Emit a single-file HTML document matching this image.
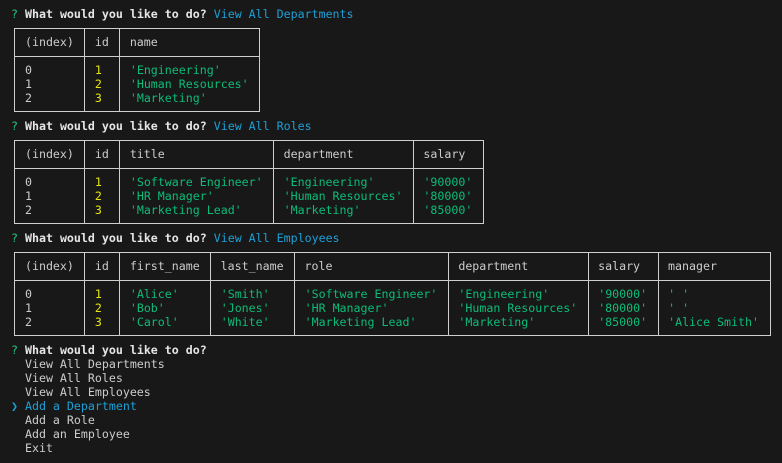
<!DOCTYPE html>
<html><head><meta charset="utf-8"><style>
html,body{margin:0;padding:0;background:#181818;width:782px;height:463px;overflow:hidden}
pre{position:absolute;left:11px;top:7px;margin:0;font-family:"DejaVu Sans Mono","Liberation Mono",monospace;font-size:11.62px;line-height:14px;color:#cccccc}
.q{color:#23c47e}.b{font-weight:bold;color:#e6e6e6}.c{color:#1ea0d6}.g{color:#0dbc79}.y{color:#e5e510}
.h{position:absolute;height:1px;background:#cfcfcf}
.v{position:absolute;width:1px;background:#cfcfcf}
</style></head><body>
<pre><span class="q">?</span> <span class="b">What would you like to do?</span> <span class="c">View All Departments</span>

  (index)   id   name

  0         <span class="y">1</span>    <span class="g">'Engineering'</span>
  1         <span class="y">2</span>    <span class="g">'Human Resources'</span>
  2         <span class="y">3</span>    <span class="g">'Marketing'</span>

<span class="q">?</span> <span class="b">What would you like to do?</span> <span class="c">View All Roles</span>

  (index)   id   title                 department          salary

  0         <span class="y">1</span>    <span class="g">'Software Engineer'</span>   <span class="g">'Engineering'</span>       <span class="g">'90000'</span>
  1         <span class="y">2</span>    <span class="g">'HR Manager'</span>          <span class="g">'Human Resources'</span>   <span class="g">'80000'</span>
  2         <span class="y">3</span>    <span class="g">'Marketing Lead'</span>      <span class="g">'Marketing'</span>         <span class="g">'85000'</span>

<span class="q">?</span> <span class="b">What would you like to do?</span> <span class="c">View All Employees</span>

  (index)   id   first_name   last_name   role                  department          salary    manager

  0         <span class="y">1</span>    <span class="g">'Alice'</span>      <span class="g">'Smith'</span>     <span class="g">'Software Engineer'</span>   <span class="g">'Engineering'</span>       <span class="g">'90000'</span>   <span class="g">' '</span>
  1         <span class="y">2</span>    <span class="g">'Bob'</span>        <span class="g">'Jones'</span>     <span class="g">'HR Manager'</span>          <span class="g">'Human Resources'</span>   <span class="g">'80000'</span>   <span class="g">' '</span>
  2         <span class="y">3</span>    <span class="g">'Carol'</span>      <span class="g">'White'</span>     <span class="g">'Marketing Lead'</span>      <span class="g">'Marketing'</span>         <span class="g">'85000'</span>   <span class="g">'Alice Smith'</span>

<span class="q">?</span> <span class="b">What would you like to do?</span>
  View All Departments
  View All Roles
  View All Employees
<span class="c">❯ Add a Department</span>
  Add a Role
  Add an Employee
  Exit</pre>

<div class="h" style="left:14px;width:246px;top:28px"></div>
<div class="h" style="left:14px;width:246px;top:56px"></div>
<div class="h" style="left:14px;width:246px;top:111px"></div>
<div class="v" style="left:14px;top:28px;height:84px"></div>
<div class="v" style="left:84px;top:28px;height:84px"></div>
<div class="v" style="left:119px;top:28px;height:84px"></div>
<div class="v" style="left:259px;top:28px;height:84px"></div>

<div class="h" style="left:14px;width:470px;top:140px"></div>
<div class="h" style="left:14px;width:470px;top:168px"></div>
<div class="h" style="left:14px;width:470px;top:223px"></div>
<div class="v" style="left:14px;top:140px;height:84px"></div>
<div class="v" style="left:84px;top:140px;height:84px"></div>
<div class="v" style="left:119px;top:140px;height:84px"></div>
<div class="v" style="left:273px;top:140px;height:84px"></div>
<div class="v" style="left:413px;top:140px;height:84px"></div>
<div class="v" style="left:483px;top:140px;height:84px"></div>

<div class="h" style="left:14px;width:757px;top:252px"></div>
<div class="h" style="left:14px;width:757px;top:280px"></div>
<div class="h" style="left:14px;width:757px;top:335px"></div>
<div class="v" style="left:14px;top:252px;height:84px"></div>
<div class="v" style="left:84px;top:252px;height:84px"></div>
<div class="v" style="left:119px;top:252px;height:84px"></div>
<div class="v" style="left:210px;top:252px;height:84px"></div>
<div class="v" style="left:294px;top:252px;height:84px"></div>
<div class="v" style="left:448px;top:252px;height:84px"></div>
<div class="v" style="left:588px;top:252px;height:84px"></div>
<div class="v" style="left:658px;top:252px;height:84px"></div>
<div class="v" style="left:770px;top:252px;height:84px"></div>
</body></html>
